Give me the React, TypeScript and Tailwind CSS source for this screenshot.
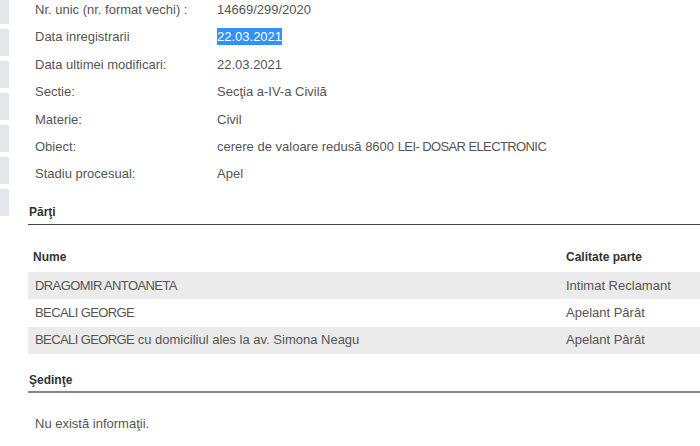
import React from "react";

const Caps = ({ children }: { children: React.ReactNode }) => (
  <span className="tracking-[-0.6px]">{children}</span>
);

const info: [string, React.ReactNode][] = [
  ["Nr. unic (nr. format vechi) :", "14669/299/2020"],
  ["Data inregistrarii", "22.03.2021"],
  ["Data ultimei modificari:", "22.03.2021"],
  ["Sectie:", "Secţia a-IV-a Civilă"],
  ["Materie:", "Civil"],
  [
    "Obiect:",
    <>
      cerere de valoare redusă 8600 <Caps>LEI- DOSAR ELECTRONIC</Caps>
    </>,
  ],
  ["Stadiu procesual:", "Apel"],
];

const parti: [React.ReactNode, string][] = [
  [<Caps>DRAGOMIR ANTOANETA</Caps>, "Intimat Reclamant"],
  [<Caps>BECALI GEORGE</Caps>, "Apelant Pârât"],
  [
    <>
      <Caps>BECALI GEORGE</Caps> cu domiciliul ales la av. Simona Neagu
    </>,
    "Apelant Pârât",
  ],
];

export default function App() {
  return (
    <div
      className="relative w-[700px] h-[446px] overflow-hidden bg-white text-[13px] text-[#555]"
      style={{ fontFamily: '"Liberation Sans", Arial, sans-serif' }}
    >
      <div className="absolute left-0 top-0 w-[9px] flex flex-col gap-[5px]">
        {[24, 27, 27, 27, 27, 27, 27].map((h, i) => (
          <div key={i} className="bg-[#e4e7ec]" style={{ height: h }} />
        ))}
      </div>

      <div className="-mt-[4px]">
        {info.map(([k, v], i) => (
          <div key={i} className="flex items-center h-[27.4px]">
            <div className="pl-[35px] w-[217px]">{k}</div>
            <div>
              {i === 1 ? (
                <span className="bg-[#3390ff] text-white py-[1px]">{v}</span>
              ) : (
                v
              )}
            </div>
          </div>
        ))}
      </div>

      <div className="ml-[28px] mt-[17px]">
        <div className="text-[12px] font-bold text-[#333] pl-[1px] pb-[4px] border-b border-[#444] leading-[15px]">
          Părţi
        </div>
        <div className="flex items-center h-[20px] mt-[22px] mb-[5px] text-[12px] font-bold text-[#333]">
          <div className="pl-[5px] flex-1">Nume</div>
          <div className="w-[134px]">Calitate parte</div>
        </div>
        {parti.map(([n, c], i) => (
          <div
            key={i}
            className={`flex items-center h-[27.4px] ${i % 2 === 0 ? "bg-[#ebebeb]" : "bg-white"}`}
          >
            <div className="pl-[7px] flex-1">{n}</div>
            <div className="w-[134px]">{c}</div>
          </div>
        ))}
        <div className="mt-[19px] text-[12px] font-bold text-[#333] pl-[1px] pb-[3px] border-b-2 border-[#888] leading-[15px]">
          Şedinţe
        </div>
        <div className="pl-[7px] mt-[21px]">Nu există informaţii.</div>
      </div>
    </div>
  );
}
